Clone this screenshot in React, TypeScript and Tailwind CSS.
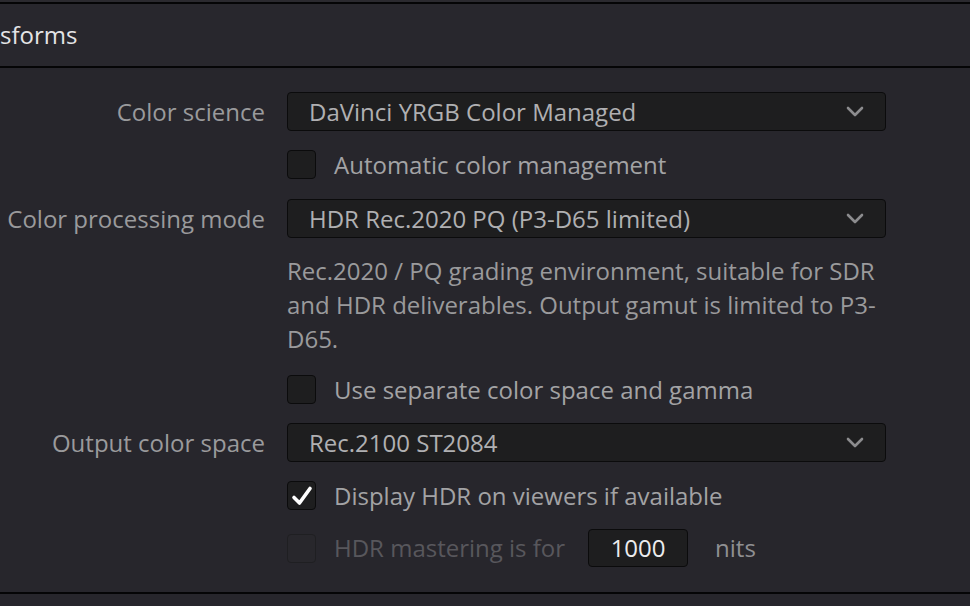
import { ReactNode } from "react";

function Chevron() {
  return (
    <svg width="18" height="11" viewBox="0 0 18 11" className="shrink-0">
      <path d="M2 2 L9 9 L16 2" fill="none" stroke="#8c8c8e" strokeWidth="2.6" strokeLinecap="round" strokeLinejoin="round" />
    </svg>
  );
}

function Select({ value }: { value: string }) {
  return (
    <div className="flex h-[39px] w-[599px] items-center justify-between rounded-[4px] border border-[#0b0b0c] bg-[#1e1e1f] pl-[21px] pr-[21px] text-[#b0b0b2]">
      <span>{value}</span>
      <Chevron />
    </div>
  );
}

function Checkbox({ checked, disabled, children }: { checked?: boolean; disabled?: boolean; children: ReactNode }) {
  return (
    <div className="flex h-[29px] items-center gap-[18px]">
      <div
        className={
          disabled
            ? "flex h-[29px] w-[29px] items-center justify-center rounded-[4px] border border-[#1f1f22] bg-[#28272c]"
            : "flex h-[29px] w-[29px] items-center justify-center rounded-[4px] border border-[#0b0b0c] bg-[#1e1e1f]"
        }
      >
        {checked && (
          <svg width="24" height="22" viewBox="0 0 24 22">
            <path d="M4 12.5 L9.5 18 L20 3.5" fill="none" stroke="#ffffff" strokeWidth="3.6" strokeLinecap="round" strokeLinejoin="round" />
          </svg>
        )}
      </div>
      {children}
    </div>
  );
}

function Row({ label, children, className }: { label?: string; children: ReactNode; className?: string }) {
  return (
    <div className={"flex items-center " + (className ?? "")}>
      <div className="w-[265px] shrink-0 whitespace-nowrap text-right text-[#9a9a9c]">{label}</div>
      <div className="ml-[22px] flex items-center">{children}</div>
    </div>
  );
}

export default function App() {
  return (
    <div
      className="h-[606px] w-[970px] overflow-hidden bg-[#27262c] text-[24px] leading-[34px]"
      style={{ fontFamily: "'Open Sans', 'Noto Sans', sans-serif" }}
    >
      <div className="h-[2px] bg-[#2b2a2f]" />
      <div className="h-[2px] bg-[#050506]" />
      <div className="flex h-[62px] items-center bg-[#28272d] text-[24px] text-[#e4e4e6]">sforms</div>
      <div className="h-[2px] bg-[#050506]" />

      <div className="flex flex-col pt-[24px]">
        <Row label="Color science">
          <Select value="DaVinci YRGB Color Managed" />
        </Row>
        <Row className="mt-[19px]">
          <Checkbox>
            <span className="text-[#a3a3a5]">Automatic color management</span>
          </Checkbox>
        </Row>
        <Row label="Color processing mode" className="mt-[20px]">
          <Select value="HDR Rec.2020 PQ (P3-D65 limited)" />
        </Row>
        <Row className="mt-[16px]">
          <p className="w-[599px] text-[#9a9a9c]">
            Rec.2020 / PQ grading environment, suitable for SDR
            <br />
            and HDR deliverables. Output gamut is limited to P3-
            <br />
            D65.
          </p>
        </Row>
        <Row className="mt-[19px]">
          <Checkbox>
            <span className="text-[#a3a3a5]">Use separate color space and gamma</span>
          </Checkbox>
        </Row>
        <Row className="mt-[19px]" label="Output color space">
          <Select value="Rec.2100 ST2084" />
        </Row>
        <Row className="mt-[19px]">
          <Checkbox checked>
            <span className="text-[#a3a3a5]">Display HDR on viewers if available</span>
          </Checkbox>
        </Row>
        <Row className="mt-[19px]">
          <div className="flex h-[38px] items-center">
            <Checkbox disabled>
              <span className="text-[#58575c]">HDR mastering is for</span>
            </Checkbox>
            <div className="ml-[23px] flex h-[38px] w-[100px] items-center justify-center rounded-[4px] border border-[#0b0b0c] bg-[#1e1e1f] text-[#ececee]">
              1000
            </div>
            <span className="ml-[27px] text-[#8f8f92]">nits</span>
          </div>
        </Row>
      </div>

      <div className="mt-[25px] h-[2px] bg-[#050506]" />
    </div>
  );
}
